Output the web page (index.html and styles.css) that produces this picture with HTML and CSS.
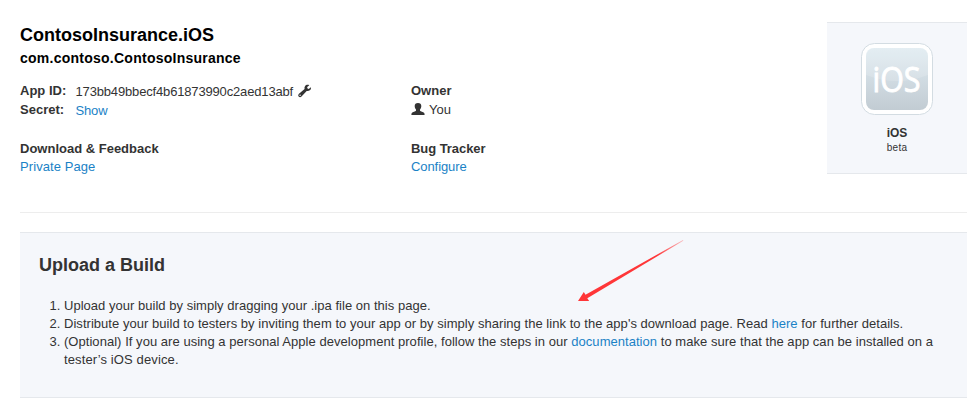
FILE: index.html
```html
<!DOCTYPE html>
<html lang="en">
<head>
<meta charset="utf-8">
<title>ContosoInsurance.iOS</title>
<link rel="stylesheet" href="styles.css">
</head>
<body>
<main class="page">
  <header class="app">
    <div class="info">
      <h1 class="name">ContosoInsurance.iOS</h1>
      <p class="bundle">com.contoso.ContosoInsurance</p>
      <div class="columns">
        <section class="col">
          <dl class="ids">
            <dt>App ID:</dt>
            <dd><span class="hash">173bb49bbecf4b61873990c2aed13abf</span>
              <svg class="wrench" width="14" height="14" viewBox="0 0 14 14"><path d="M12.900 3.200 10.700 4.900 9.300 4.300 9.200 2.900 11.300 1.200C9.700.5 7.900.9 7 2.200c-.6.9-.7 1.800-.4 2.700L1 9.800c-.9.8-1 2-.3 2.800.7.8 2 .8 2.800-.1l5.200-5.600c1 .3 2.200.1 3.100-.6 1-.8 1.400-2 1.100-3.100zM2.100 12a.7.7 0 1 1 0-1.400.7.7 0 0 1 0 1.400z"/></svg>
            </dd>
            <dt>Secret:</dt>
            <dd><a class="show">Show</a></dd>
          </dl>
          <h2 class="label feedback">Download &amp; Feedback</h2>
          <a class="private">Private Page</a>
        </section>
        <section class="col">
          <h2 class="label owner">Owner</h2>
          <div class="user">
            <svg width="14" height="12" viewBox="0 0 14 12"><path d="M7 0C4.800 0 3.700 1.300 3.700 3c0 1.500.5 2.700 1.300 3.500v1.300C4.500 8.600 1.600 8.900.8 10 .4 10.700.4 12 .4 12h13.200s0-1.300-.4-2C12.400 8.900 9.500 8.600 9 7.800V6.500C9.800 5.700 10.300 4.500 10.300 3c0-1.700-1.100-3-3.300-3z"/></svg>
            <span>You</span>
          </div>
          <h2 class="label tracker">Bug Tracker</h2>
          <a class="configure">Configure</a>
        </section>
      </div>
    </div>
    <aside class="platform">
      <svg class="logo" width="72" height="72" viewBox="0 0 72 72">
        <defs>
          <linearGradient id="face" x1="0" y1="0" x2="0" y2="1">
            <stop offset="0" stop-color="#dfebf1"/>
            <stop offset="1" stop-color="#c2ccd3"/>
          </linearGradient>
        </defs>
        <rect x=".5" y=".5" width="71" height="71" rx="13" fill="#fff" stroke="#d3dce2"/>
        <rect x="5" y="5" width="62" height="62" rx="8" fill="url(#face)"/>
        <path d="M5 32V13a8 8 0 0 1 8-8h46a8 8 0 0 1 8 8v19Q36 44 5 32z" fill="#fff" opacity=".16"/>
        <text class="logo-text" x="11.500" y="48.500" textLength="48" lengthAdjust="spacingAndGlyphs">iOS</text>
      </svg>
      <strong class="os">iOS</strong>
      <span class="beta">beta</span>
    </aside>
  </header>
  <section class="upload">
    <h2 class="upload-title">Upload a Build</h2>
    <ol class="steps">
      <li class="step-1">Upload your build by simply dragging your .ipa file on this page.</li>
      <li class="step-2">Distribute your build to testers by inviting them to your app or by simply sharing the link to the app's download page. Read <a>here</a> for further details.</li>
      <li class="step-3">(Optional) If you are using a personal Apple development profile, follow the steps in our <a>documentation</a> to make sure that the app can be installed on a <br><span class="tail">tester’s iOS device.</span></li>
    </ol>
    <svg class="arrow" width="108" height="64" viewBox="0 0 108 64">
      <defs>
        <linearGradient id="fade" x1="0" x2="1">
          <stop offset="0" stop-color="#ff3638"/>
          <stop offset=".75" stop-color="#ff3638"/>
          <stop offset="1" stop-color="#ff3638" stop-opacity=".3"/>
        </linearGradient>
      </defs>
      <path d="M0 61 5.800 52 7.500 54.800 105 0 105.300.7 9.300 58.200 11.200 61z" fill="url(#fade)"/>
    </svg>
  </section>
</main>
</body>
</html>
```
FILE: styles.css
```css
* { box-sizing: border-box; }
body {
  margin: 0;
  background: #fff;
  color: #333;
  font: 13px/18px "Liberation Sans", Arial, sans-serif;
}
h1, h2, p, dl, dd, ol { margin: 0; padding: 0; }
a { color: #1a82c6; text-decoration: none; }
svg { display: block; fill: #333; }
.page { padding: 22px 13px 0 20px; }
.app {
  display: flex;
  justify-content: space-between;
  height: 191px;
  border-bottom: 1px solid #ededed;
}
.name { margin-top: 2px; font-size: 18px; line-height: 22px; color: #000; }
.bundle { margin-top: 3px; font-size: 14px; font-weight: bold; letter-spacing: .25px; color: #000; }
.columns { display: grid; grid-template-columns: 391px 391px; margin-top: 15px; }
.ids { display: grid; grid-template-columns: 55.5px auto; grid-template-rows: 19px 19px; }
.ids dt, .label { font-size: 13px; font-weight: bold; }
.ids dd { display: flex; padding-top: 1px; }
.hash { letter-spacing: -.16px; }
.wrench { margin: 1px 0 0 4.5px; }
.show { letter-spacing: -.15px; }
.feedback { margin-top: 20px; }
.private { letter-spacing: .08px; }
.user { display: flex; align-items: center; gap: 4px; height: 18px; margin-top: 1px; }
.user svg { margin-top: -2px; }
.tracker { margin-top: 21px; letter-spacing: -.06px; }
.configure { letter-spacing: -.08px; }
.platform {
  display: flex;
  flex-direction: column;
  align-items: center;
  width: 140px;
  height: 152px;
  padding-top: 20px;
  background: #f5f7fb;
  border: solid #e5e8ec;
  border-width: 1px 0;
}
.logo-text { font: 400 34px "Open Sans", sans-serif; fill: #fff; stroke: #fff; stroke-width: .9px; }
.os { margin-top: 10px; font-size: 12px; line-height: 16px; }
.beta { font-size: 10px; line-height: 14px; letter-spacing: .3px; }
.upload {
  position: relative;
  height: 166px;
  margin-top: 19px;
  padding: 21px 19px 0;
  background: #f5f7fb;
  border: solid #e5e8ec;
  border-width: 1px 0;
}
.upload-title { font-size: 18px; line-height: 22px; }
.steps { margin-top: 21px; padding-left: 25px; white-space: nowrap; }
.step-1 { letter-spacing: .025px; }
.step-2 { letter-spacing: .038px; }
.step-3 { letter-spacing: .04px; }
.tail { letter-spacing: .12px; }
.arrow { position: absolute; left: 558px; top: 7px; }
```
